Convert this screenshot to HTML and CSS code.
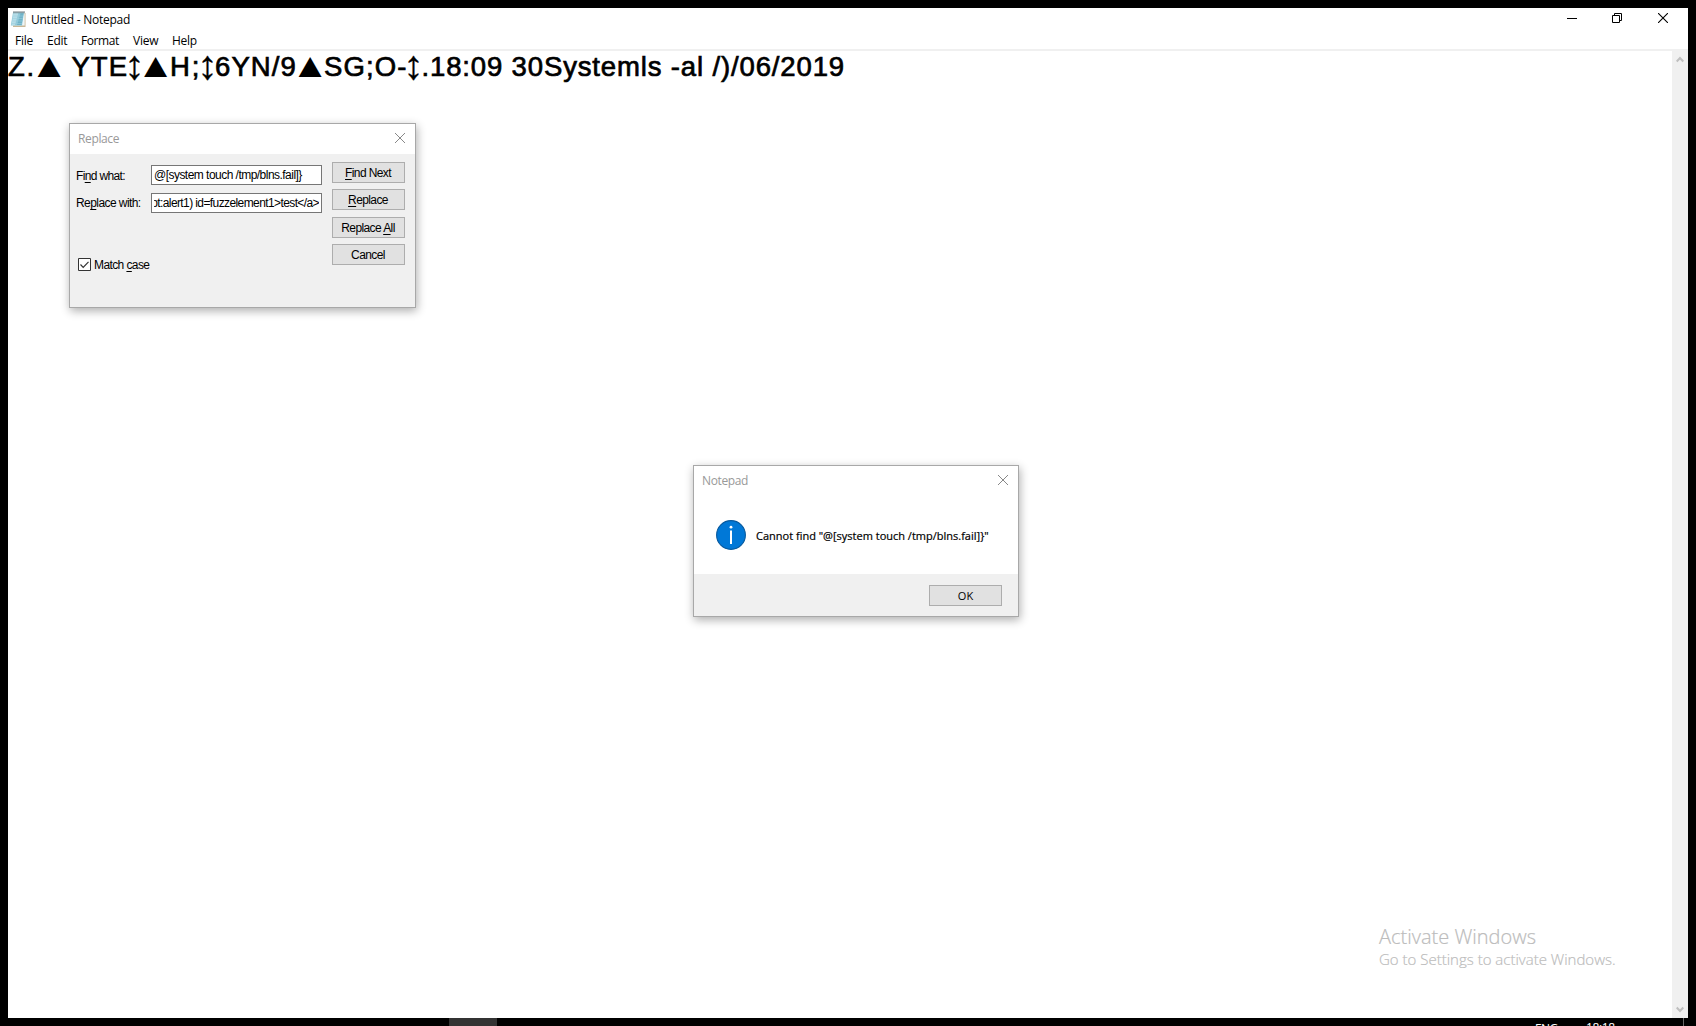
FILE: index.html
```
<!DOCTYPE html>
<html lang="en">
<head>
<meta charset="utf-8">
<title>Untitled - Notepad</title>
<link rel="stylesheet" href="styles.css">
</head>
<body>
<main class="window">
  <header class="titlebar">
    <svg class="app-icon" width="17" height="17" viewBox="0 0 17 17">
      <path d="M4 2h11.5v14H3z" fill="#c9b797"/>
      <path d="M4 2h10.7v12.6H3z" fill="#eef5f7"/>
      <path d="M3 1.5h11L12 14.5H.8z" fill="#8fc9da"/>
      <path d="M3.4 2h5L5 14H1.5z" fill="#b5dde8"/>
      <path d="M10.5 2.5h3L11.5 14H7z" fill="#6fb3c8"/>
      <path d="M3 5h10M2.6 7.5h10M2.2 10h10M1.8 12.5h10" stroke="#9ccfdd" stroke-width=".6"/>
      <path d="M3.5 1.2h11" stroke="#44545a" stroke-width="2" stroke-dasharray="1 1"/>
    </svg>
    <span class="title">Untitled - Notepad</span>
    <div class="controls">
      <svg width="10" height="10" viewBox="0 0 10 10"><path d="M0 5.5h10" stroke="#000"/></svg>
      <svg width="10" height="10" viewBox="0 0 10 10"><path d="M.5 2.5h7v7h-7zM2.5 2.5v-2h7v7h-2" fill="none" stroke="#000"/></svg>
      <svg class="close" width="10" height="10" viewBox="0 0 10 10"><path d="M0 0l10 10M10 0L0 10" stroke="#000" stroke-width="1.1"/></svg>
    </div>
  </header>
  <nav class="menu">
    <span class="m-file">File</span><span class="m-edit">Edit</span><span class="m-format">Format</span><span class="m-view">View</span><span class="m-help">Help</span>
  </nav>
  <section class="editor">
    <div class="document">
      <span class="w-z">Z.</span><span class="tri t1">▲</span><span class="w-yte">YTE</span><span class="arrow">↕</span><span class="tri t2">▲</span><span class="w-h">H;</span><span class="arrow">↕</span><span class="w-six">6YN/9</span><span class="tri t3">▲</span><span class="w-sg">SG;O-</span><span class="arrow">↕</span><span class="w-rest">.18:09 30Systemls -al /)/06/2019</span>
    </div>
    <div class="scrollbar">
      <svg width="8" height="7" viewBox="0 0 8 7"><path d="M.7 5.5L4 2l3.3 3.5" fill="none" stroke="#bfbfbf" stroke-width="2.1"/></svg>
      <svg width="8" height="7" viewBox="0 0 8 7"><path d="M.7 1.5L4 5l3.3-3.5" fill="none" stroke="#bfbfbf" stroke-width="2.1"/></svg>
    </div>
  </section>
</main>

<footer class="taskbar">
  <span class="task"></span>
  <span class="lang">ENG</span>
  <span class="clock">18:18</span>
  <span class="show-desktop"></span>
</footer>

<aside class="watermark">
  <div class="wm-title">Activate Windows</div>
  <div class="wm-text">Go to Settings to activate Windows.</div>
</aside>

<section class="dialog replace">
  <header class="dialog-title"><span>Replace</span>
    <svg width="10" height="10" viewBox="0 0 10 10"><path d="M0 0l10 10M10 0L0 10" stroke="#888"/></svg>
  </header>
  <div class="replace-body">
    <div class="fields">
      <div class="field"><label>Fi<u>n</u>d what:</label><div class="input"><span>@[system touch /tmp/blns.fail]}</span></div></div>
      <div class="field"><label class="l2">Re<u>p</u>lace with:</label><div class="input end"><span>pt:alert1) id=fuzzelement1&gt;test&lt;/a&gt;</span></div></div>
      <div class="check"><svg width="13" height="13" viewBox="0 0 13 13"><path d="M.5.5h12v12H.5z" fill="#fff" stroke="#333"/><path d="M2.5 6.5l2.7 2.8 5.3-5.5" fill="none" stroke="#333" stroke-width="1.2"/></svg><span>Match <u>c</u>ase</span></div>
    </div>
    <div class="buttons">
      <div class="btn"><span><u>F</u>ind Next</span></div>
      <div class="btn"><span><u>R</u>eplace</span></div>
      <div class="btn third"><span>Replace <u>A</u>ll</span></div>
      <div class="btn"><span>Cancel</span></div>
    </div>
  </div>
</section>

<section class="dialog message">
  <header class="dialog-title"><span>Notepad</span>
    <svg width="10" height="10" viewBox="0 0 10 10"><path d="M0 0l10 10M10 0L0 10" stroke="#888"/></svg>
  </header>
  <div class="message-body">
    <svg width="30" height="30" viewBox="0 0 30 30"><circle cx="15" cy="15" r="14.4" fill="#0078d7" stroke="#085a9e" stroke-width="1.1"/><path d="M15 10.5V24" stroke="#fff" stroke-width="2"/><circle cx="15" cy="7.2" r="1.4" fill="#fff"/></svg>
    <span>Cannot find "@[system touch /tmp/blns.fail]}"</span>
  </div>
  <footer class="message-foot"><div class="btn ok"><span>OK</span></div></footer>
</section>
</body>
</html>
```
FILE: styles.css
```
* { box-sizing: border-box; }
body {
  margin: 0;
  width: 1696px;
  height: 1026px;
  overflow: hidden;
  background: #000;
  color: #000;
  font: 12px/16px "Open Sans", "Noto Sans", sans-serif;
  white-space: nowrap;
  display: flex;
  flex-direction: column;
  position: relative;
}
svg { display: block; flex: none; }
u { text-decoration: underline; text-underline-offset: 2px; text-decoration-skip-ink: none; text-decoration-thickness: 1px; }

.window {
  margin: 8px 8px 0;
  height: 1010px;
  background: #fff;
  display: flex;
  flex-direction: column;
}
.titlebar { display: flex; height: 23px; padding: 3px 20px 0 2px; }
.app-icon { margin-right: 4px; }
.title { letter-spacing: -.25px; padding-top: 1px; }
.controls { margin-left: auto; display: flex; gap: 35px; padding-top: 2px; }
.controls .close { margin-left: 1px; }
.menu { height: 18px; padding: 2px 0 0 7px; display: flex; letter-spacing: -.25px; }
.m-file, .m-edit, .m-view, .m-help { flex: none; }
.m-file { width: 32px; }
.m-edit { width: 34px; }
.m-format { width: 52px; letter-spacing: -.4px; }
.m-view { width: 39px; }

.editor { flex: 1; border-top: 2px solid #f0f0f0; display: flex; justify-content: space-between; }
.document {
  display: flex;
  height: 32px;
  font: 27.5px/32px "Liberation Sans", Arial, sans-serif;
  -webkit-text-stroke: .7px #000;
}
.document span { flex: none; }
.w-z { width: 29px; letter-spacing: 1.7px; }
.tri, .arrow { display: flex; justify-content: center; }
.tri { font-size: 34px; line-height: 28px; -webkit-text-stroke: 0; transform: scaleX(1.15); }
.arrow { width: 13px; font-size: 41px; line-height: 29px; -webkit-text-stroke: .3px #000; }
.t1 { width: 24px; }
.w-yte { width: 67px; padding-left: 10.5px; letter-spacing: 1px; }
.t2 { width: 29px; }
.w-h { width: 31px; letter-spacing: 2px; }
.w-six { width: 83px; padding-left: 1px; letter-spacing: 1.1px; }
.t3 { width: 26px; }
.w-sg { width: 84px; padding-left: 1px; letter-spacing: 1.1px; }
.w-rest { padding-left: 1.5px; letter-spacing: .86px; }
.scrollbar {
  width: 16px;
  background: #f0f0f0;
  padding: 5px 0;
  display: flex;
  flex-direction: column;
  align-items: center;
  justify-content: space-between;
}

.taskbar { height: 8px; overflow: hidden; display: flex; color: #fff; padding: 0 12px 0 449px; }
.task { width: 48px; height: 8px; background: #333; }
.lang { margin-left: auto; width: 51px; line-height: 20px; padding-top: 1px; letter-spacing: -.6px; }
.clock { width: 97px; line-height: 20px; letter-spacing: -.4px; }
.show-desktop { width: 1px; background: #666; }

.watermark { position: absolute; left: 1379px; top: 923px; color: #bcbcbc; font-weight: 300; -webkit-text-stroke: .2px #bcbcbc; }
.wm-title { font-size: 20px; line-height: 28px; }
.wm-text { font-size: 15px; line-height: 16px; }

.dialog {
  position: absolute;
  border: 1px solid #a8a8a8;
  background: #f0f0f0;
  box-shadow: 1px 3px 9px rgba(0, 0, 0, .32);
  display: flex;
  flex-direction: column;
}
.dialog-title {
  height: 30px;
  background: #fff;
  color: #999;
  display: flex;
  justify-content: space-between;
  padding: 7px 10px 0 8px;
  letter-spacing: -.37px;
}
.dialog-title svg { margin-top: 2px; }
.replace { left: 69px; top: 123px; width: 347px; height: 185px; font-family: "Liberation Sans", Arial, sans-serif; }
.replace .dialog-title { font-family: "Open Sans", "Noto Sans", sans-serif; }
.replace-body { flex: 1; display: flex; justify-content: space-between; padding: 8px 10px 0 6px; letter-spacing: -.6px; }
.fields { padding-top: 3px; }
.field { display: flex; align-items: center; height: 20px; margin-bottom: 8px; }
.field label { width: 75px; letter-spacing: -.65px; padding-top: 1px; }
.field .l2 { letter-spacing: -.57px; padding-top: 0; }
.input {
  width: 171px;
  height: 20px;
  border: 1px solid #767676;
  background: #fff;
  padding: 0 2px;
  line-height: 18px;
  letter-spacing: -.53px;
}
.input span { display: flex; overflow: hidden; }
.input.end span { justify-content: flex-end; letter-spacing: -.6px; }
.check { display: flex; align-items: center; gap: 3px; padding-left: 2px; margin-top: 42px; }
.check span { padding-top: 2px; }
.buttons { display: flex; flex-direction: column; gap: 6px; }
.btn {
  width: 73px;
  height: 21px;
  border: 1px solid #adadad;
  background: #e1e1e1;
  display: flex;
  justify-content: center;
  line-height: 20px;
}
.buttons .btn { padding-right: 1px; }
.third { margin-top: 1px; }

.message { left: 693px; top: 465px; width: 326px; height: 152px; background: #fff; font-size: 11px; }
.message .dialog-title { font-size: 12px; }
.message-body { flex: 1; display: flex; gap: 10px; padding: 24px 0 0 22px; }
.message-body span { padding-top: 8px; -webkit-text-stroke: .2px #000; }
.message-foot { height: 42px; background: #f0f0f0; display: flex; justify-content: flex-end; padding: 11px 16px 0 0; }
```
